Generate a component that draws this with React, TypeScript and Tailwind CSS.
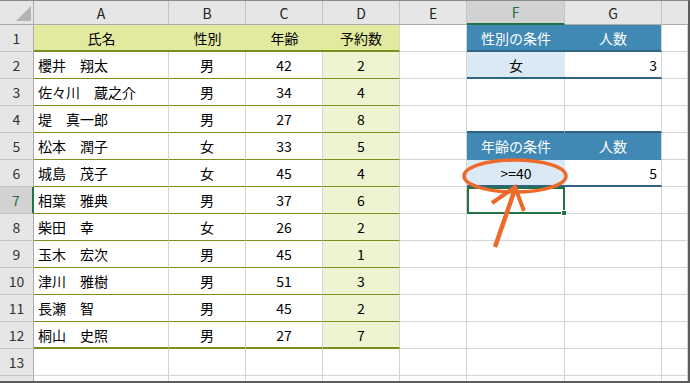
import React from "react";

const rows = [
  ["櫻井　翔太", "男", "42", "2"],
  ["佐々川　蔵之介", "男", "34", "4"],
  ["堤　真一郎", "男", "27", "8"],
  ["松本　潤子", "女", "33", "5"],
  ["城島　茂子", "女", "45", "4"],
  ["相葉　雅典", "男", "37", "6"],
  ["柴田　幸", "女", "26", "2"],
  ["玉木　宏次", "男", "45", "1"],
  ["津川　雅樹", "男", "51", "3"],
  ["長瀬　智", "男", "45", "2"],
  ["桐山　史照", "男", "27", "7"],
];

const cols = ["A", "B", "C", "D", "E", "F", "G"];
const widths = ["w-[135px]", "w-[77px]", "w-[77px]", "w-[77px]", "w-[67px]", "w-[98px]", "w-[97px]"];

const grid = "border-r border-b border-[#d4d4d4]";
const olive = "border-[#7f8d1f]";
const blue = "border-[#2f6582]";

function RowHead({ n }: { n: number }) {
  const sel = n === 7;
  return (
    <div
      className={`w-[34px] shrink-0 flex items-center justify-center border-b border-[#c4c4c4] ${
        sel
          ? "bg-[#d2d2d2] text-[#217346] border-r-2 border-r-[#217346]"
          : "bg-[#e6e6e6] text-[#333] border-r border-r-[#ababab]"
      }`}
    >
      {n}
    </div>
  );
}

// F/G cells for rows 1..14
function condCells(n: number) {
  if (n === 1 || n === 5) {
    return (
      <>
        <div className={`w-[98px] flex items-center justify-center bg-[#4189b5] text-white ${n === 1 ? `border-b-2 ${blue}` : "border-b border-b-[#4189b5]"}`}>
          {n === 1 ? "性別の条件" : "年齢の条件"}
        </div>
        <div className={`w-[97px] flex items-center justify-center bg-[#4189b5] text-white border-r border-r-[#d4d4d4] ${n === 1 ? `border-b-2 ${blue}` : "border-b border-b-[#4189b5]"}`}>
          人数
        </div>
      </>
    );
  }
  if (n === 2 || n === 6) {
    return (
      <>
        <div className={`w-[98px] flex items-center justify-center bg-[#dae9f3] border-b-2 ${blue}`}>
          {n === 2 ? "女" : ">=40"}
        </div>
        <div className={`w-[97px] flex items-center justify-end pr-1 border-r border-r-[#d4d4d4] border-b-2 ${blue}`}>
          {n === 2 ? "3" : "5"}
        </div>
      </>
    );
  }
  if (n === 4) {
    return (
      <>
        <div className={`w-[98px] border-r border-r-[#d4d4d4] border-b-2 ${blue}`} />
        <div className={`w-[97px] border-r border-r-[#d4d4d4] border-b-2 ${blue}`} />
      </>
    );
  }
  if (n === 7) {
    return (
      <>
        <div className="relative w-[98px] border-2 border-[#217346]">
          <div className="absolute -right-[4px] -bottom-[4px] w-[6px] h-[6px] bg-[#217346] border border-white" />
        </div>
        <div className={`w-[97px] ${grid}`} />
      </>
    );
  }
  return (
    <>
      <div className={`w-[98px] ${grid}`} />
      <div className={`w-[97px] ${grid}`} />
    </>
  );
}

function DataRow({ n }: { n: number }) {
  const r = rows[n - 2];
  const last = n === 12;
  const line = last ? `border-b-2 ${olive}` : `border-b ${olive}`;
  return (
    <div className="flex h-[27px]">
      <RowHead n={n} />
      <div className={`w-[135px] flex items-center pl-1 border-r border-r-[#d4d4d4] ${line}`}>{r[0]}</div>
      <div className={`w-[77px] flex items-center justify-center border-r border-r-[#d4d4d4] ${line}`}>{r[1]}</div>
      <div className={`w-[77px] flex items-center justify-center border-r border-r-[#d4d4d4] ${line}`}>{r[2]}</div>
      <div className={`w-[77px] flex items-center justify-center bg-[#eef3d1] border-r border-r-[#d4d4d4] ${line}`}>{r[3]}</div>
      <div className={`w-[67px] ${grid}`} />
      {condCells(n)}
      <div className={`flex-1 ${grid}`} />
    </div>
  );
}

function EmptyRow({ n }: { n: number }) {
  return (
    <div className="flex h-[27px]">
      <RowHead n={n} />
      <div className={`w-[135px] ${grid}`} />
      <div className={`w-[77px] ${grid}`} />
      <div className={`w-[77px] ${grid}`} />
      <div className={`w-[77px] ${grid}`} />
      <div className={`w-[67px] ${grid}`} />
      <div className={`w-[98px] ${grid}`} />
      <div className={`w-[97px] ${grid}`} />
      <div className={`flex-1 ${grid}`} />
    </div>
  );
}

export default function App() {
  return (
    <div className="relative w-[690px] h-[383px] overflow-hidden bg-white border-t border-t-[#8a8a8a] border-r-2 border-r-[#5c5c5c] border-b-2 border-b-[#5c5c5c] font-['Noto_Sans_CJK_JP','Noto_Sans',sans-serif] text-[14px] text-black leading-none">
      {/* column headers */}
      <div className="flex h-[24px]">
        <div className="relative w-[34px] shrink-0 bg-[#e6e6e6] border-r border-b border-[#ababab]">
          <svg className="absolute right-[2px] bottom-[3px]" width="15" height="15" viewBox="0 0 15 15">
            <polygon points="15,0 15,15 0,15" fill="#b4b4b4" />
          </svg>
        </div>
        {cols.map((c, i) =>
          c === "F" ? (
            <div key={c} className={`${widths[i]} flex items-center justify-center bg-[#d2d2d2] text-[#217346] border-r border-r-[#c4c4c4] border-b-2 border-b-[#217346]`}>
              {c}
            </div>
          ) : (
            <div key={c} className={`${widths[i]} flex items-center justify-center bg-[#e6e6e6] text-[#222] border-r border-r-[#c4c4c4] border-b border-b-[#ababab]`}>
              {c}
            </div>
          )
        )}
        <div className="flex-1 bg-[#e6e6e6] border-b border-b-[#ababab]" />
      </div>

      {/* row 1 */}
      <div className="flex h-[27px]">
        <RowHead n={1} />
        <div className={`w-[135px] flex items-center justify-center bg-[#e2ea9f] border-b-2 ${olive}`}>氏名</div>
        <div className={`w-[77px] flex items-center justify-center bg-[#e2ea9f] border-b-2 ${olive}`}>性別</div>
        <div className={`w-[77px] flex items-center justify-center bg-[#e2ea9f] border-b-2 ${olive}`}>年齢</div>
        <div className={`w-[77px] flex items-center justify-center bg-[#e2ea9f] border-r border-r-[#d4d4d4] border-b-2 ${olive}`}>予約数</div>
        <div className={`w-[67px] ${grid}`} />
        {condCells(1)}
        <div className={`flex-1 ${grid}`} />
      </div>

      {[2, 3, 4, 5, 6, 7, 8, 9, 10, 11, 12].map((n) => (
        <DataRow key={n} n={n} />
      ))}
      <EmptyRow n={13} />
      <EmptyRow n={14} />

      {/* annotation */}
      <svg className="absolute inset-0 pointer-events-none" width="690" height="383">
        <ellipse cx="515" cy="175" rx="51" ry="16" fill="none" stroke="#ee6a2b" strokeWidth="3.5" />
        <line x1="495" y1="246" x2="514" y2="191" stroke="#ee6a2b" strokeWidth="4.5" />
        <polyline points="492,202 515,186 524,210" fill="none" stroke="#ee6a2b" strokeWidth="4" strokeLinejoin="miter" />
      </svg>
    </div>
  );
}
